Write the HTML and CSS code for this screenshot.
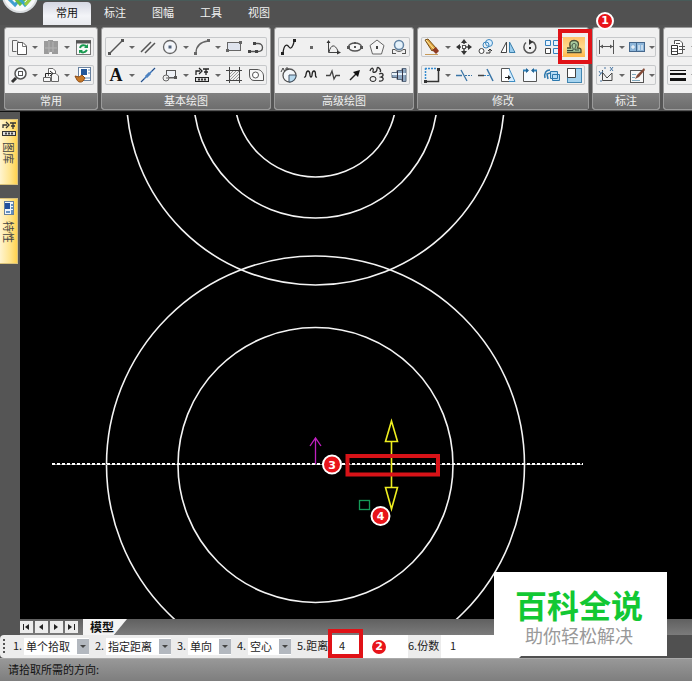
FILE: index.html
```html
<!DOCTYPE html>
<html lang="zh-CN">
<head>
    <meta charset="UTF-8" />
    <meta name="viewport" content="width=device-width, initial-scale=1.0"/>
    <title>CAD</title>
    <link rel="stylesheet" href="styles.css">
</head>
<body>
<div class="app">
    <header class="menu-bar">
        <a href="#" class="logo" aria-label="主页">
            <svg width="38" height="38" viewBox="0 0 38 38">
                <circle cx="19" cy="19" r="18" fill="#d9dde0"/>
                <circle cx="19" cy="19" r="16" fill="#f7f9fa"/>
                <path d="M6 21l8 8 5-6" fill="none" stroke="#3f9fd0" stroke-width="3"/>
                <path d="M13 21l6 7 5-5" fill="none" stroke="#6bbf3c" stroke-width="3"/>
                <path d="M18 22l6 7 8-9" fill="none" stroke="#39a7c4" stroke-width="3"/>
                <path d="M24 29l8-9" fill="none" stroke="#9ccc3c" stroke-width="3"/>
            </svg>
        </a>
        <nav class="menu">
            <a href="#" class="menu-tab active">常用</a>
            <a href="#" class="menu-tab">标注</a>
            <a href="#" class="menu-tab">图幅</a>
            <a href="#" class="menu-tab">工具</a>
            <a href="#" class="menu-tab">视图</a>
        </nav>
    </header>

    <div class="ribbon">
        <!-- Common -->
        <section class="group">
            <div class="group-body">
                <div class="tool-row">
                    <button class="tool" aria-label="复制"><svg viewBox="0 0 18 18"><path d="M6.500 13.500H2.500V2.500H7L9 4.500" fill="#f4f4f4" stroke="#666"/><path d="M7.500 4.500H13L16.500 8V16.500H7.500Z" fill="#fff" stroke="#555"/><path d="M12.500 4.500V8.500H16.500" fill="none" stroke="#777"/></svg></button>
                    <button class="drop" aria-label="更多"></button>
                    <button class="tool" aria-label="粘贴"><svg viewBox="0 0 18 18"><path d="M2 3H6V2H11V3H16V16H10V14H7V16H2Z" fill="#9b9b9b"/><path d="M7 3V15M11 4V14M3 10H15" stroke="#b4b4b4"/></svg></button>
                    <button class="drop" aria-label="更多"></button>
                    <button class="tool" aria-label="刷新"><svg viewBox="0 0 18 18"><rect x="2.500" y="2.500" width="14" height="14" fill="#fafafa" stroke="#777"/><path d="M2 4H17" stroke="#555" stroke-width="3"/><path d="M6 10C7 6.500 11 6.500 13 9M13 12C11 15 8 15 6 13" fill="none" stroke="#189a50" stroke-width="2"/><path d="M14 6V10H10ZM5 15.500V12H9Z" fill="#189a50"/></svg></button>
                </div>
                <div class="tool-row">
                    <button class="tool" aria-label="缩放"><svg viewBox="0 0 18 18"><circle cx="10.500" cy="7.500" r="5.500" fill="#f8fbfd" stroke="#555" stroke-width="1.500"/><rect x="8.500" y="5.500" width="4" height="4" fill="#fff" stroke="#555"/><path d="M6 12L2 16" stroke="#333" stroke-width="3"/></svg></button>
                    <button class="drop" aria-label="更多"></button>
                    <button class="tool" aria-label="插入图块"><svg viewBox="0 0 18 18"><path d="M6.500 10V2.500H11L13.500 5V10" fill="#fff" stroke="#666"/><path d="M9.500 7.500H14L16.500 10V15.500H9.500ZM1.500 11.500H8.500V15.500H1.500Z" fill="#f7f7f7" stroke="#666"/><path d="M3.500 11V7.500H9M8 5L11 7.500L8 10" fill="none" stroke="#222"/></svg></button>
                    <button class="drop" aria-label="更多"></button>
                    <button class="tool" aria-label="特性刷"><svg viewBox="0 0 18 18"><rect x="4.500" y="1.500" width="12" height="13" fill="#fff" stroke="#67809e"/><rect x="7" y="3" width="6" height="6" fill="#23589b"/><path d="M14 4H16M14 7H16M11 12H16" stroke="#5b88b8"/><path d="M1 10L5 11L8 9L11 12L9 15C7 17 4 16 3 14Z" fill="#c67826" stroke="#8b4a14"/></svg></button>
                </div>
            </div>
            <h2 class="group-title">常用</h2>
        </section>

        <!-- Basic drawing -->
        <section class="group">
            <div class="group-body">
                <div class="tool-row">
                    <button class="tool" aria-label="直线"><svg viewBox="0 0 18 18"><path d="M3 15L15 3" stroke="#555" stroke-width="1.500"/><path d="M1 14H4V17H1ZM14 1H17V4H14Z" fill="#555"/></svg></button>
                    <button class="drop" aria-label="更多"></button>
                    <button class="tool" aria-label="平行线"><svg viewBox="0 0 18 18"><path d="M2 14L12 4M6 15L16 5" stroke="#555" stroke-width="1.500"/></svg></button>
                    <button class="tool" aria-label="圆"><svg viewBox="0 0 18 18"><circle cx="9" cy="9" r="6.500" fill="#f4f6fa" stroke="#666" stroke-width="1.300"/><rect x="7.500" y="7.500" width="3" height="3" fill="#52647c"/></svg></button>
                    <button class="drop" aria-label="更多"></button>
                    <button class="tool" aria-label="圆弧"><svg viewBox="0 0 18 18"><path d="M3 15C3 8 8 4 15 3" fill="none" stroke="#666" stroke-width="1.300"/><path d="M1 14H4V17H1ZM14 1H17V4H14Z" fill="#666"/></svg></button>
                    <button class="drop" aria-label="更多"></button>
                    <button class="tool" aria-label="矩形"><svg viewBox="0 0 18 18"><rect x="2.500" y="4.500" width="13" height="8" fill="#dfe4ee" stroke="#666"/><path d="M1 11H4V14H1ZM14 3H17V6H14Z" fill="#666"/></svg></button>
                    <button class="tool" aria-label="多段线"><svg viewBox="0 0 18 18"><path d="M3 13.500H11C17 13.500 17 5.500 11 5.500H7" fill="none" stroke="#555" stroke-width="1.300"/><path d="M1 12H4V15H1ZM8 12H11V15H8ZM6 4H9V7H6Z" fill="#444"/></svg></button>
                </div>
                <div class="tool-row">
                    <button class="tool tool-text" aria-label="文字">A</button>
                    <button class="drop" aria-label="更多"></button>
                    <button class="tool" aria-label="中心线"><svg viewBox="0 0 18 18"><path d="M2 16L16 2" stroke="#3973ba" stroke-width="1.500"/><path d="M7 11L11 7" stroke="#4d82c0" stroke-width="3"/><path d="M2 16L5 13M13 5L16 2" stroke="#2c4a78"/></svg></button>
                    <button class="tool" aria-label="局部放大"><svg viewBox="0 0 18 18"><rect x="5.500" y="4.500" width="9" height="7" fill="#eef1f6" stroke="#555"/><circle cx="5" cy="12" r="3" fill="#eee" stroke="#666"/><path d="M5 12H16" stroke="#666"/><path d="M13 10H16V13H13Z" fill="#555"/></svg></button>
                    <button class="drop" aria-label="更多"></button>
                    <button class="tool" aria-label="提取图符"><svg viewBox="0 0 18 18"><path d="M3 9V5H7M6 2L9 5L6 8M10 3H16M13 3V9M11 6H15" fill="none" stroke="#222" stroke-width="1.300"/><rect x="2.500" y="11.500" width="13" height="4" fill="#ddd" stroke="#222"/><path d="M5 13.500H14" stroke="#333" stroke-width="2" stroke-dasharray="2 1"/></svg></button>
                    <button class="drop" aria-label="更多"></button>
                    <button class="tool" aria-label="剖面线"><svg viewBox="0 0 18 18"><path d="M4.500 1V17M14.500 1V17M1 4.500H17M1 14.500H17" stroke="#444"/><path d="M5 8L8 5M5 11L11 5M5 14L14 5M8 14L14 8M11 14L14 11" stroke="#999"/></svg></button>
                    <button class="tool" aria-label="填充"><svg viewBox="0 0 18 18"><path d="M2.500 3.500H10C14 3.500 16.500 7 16.500 10V14.500H7C4 14.500 2.500 12 2.500 9Z" fill="#f7f7f7" stroke="#555"/><circle cx="8.500" cy="9" r="3" fill="#fff" stroke="#555"/></svg></button>
                </div>
            </div>
            <h2 class="group-title">基本绘图</h2>
        </section>

        <!-- Advanced drawing -->
        <section class="group">
            <div class="group-body">
                <div class="tool-row">
                    <button class="tool" aria-label="样条"><svg viewBox="0 0 18 18"><path d="M3 15C4 6 7 6 9 9C11 12 13 8 14 4" fill="none" stroke="#222" stroke-width="1.300"/><path d="M1 14H4V17H1ZM13 1H16V4H13Z" fill="#222"/></svg></button>
                    <button class="tool" aria-label="点"><svg viewBox="0 0 18 18"><rect x="8" y="8" width="3" height="3" fill="#666"/></svg></button>
                    <button class="tool" aria-label="公式曲线"><svg viewBox="0 0 18 18"><path d="M4.500 3V14.500H14M5 14C7 6 11 6 14 13" fill="none" stroke="#444"/><path d="M4.500 2L6.500 5H2.500ZM17 14.500L13 12.500V16.500Z" fill="#333"/></svg></button>
                    <button class="tool" aria-label="椭圆"><svg viewBox="0 0 18 18"><ellipse cx="9" cy="9" rx="6.500" ry="4" fill="#f5f5f5" stroke="#555" stroke-width="1.300"/><path d="M1 8H4V11H1ZM14 8H17V11H14ZM8 4H10V6H8ZM8 8H10V10H8Z" fill="#555"/></svg></button>
                    <button class="tool" aria-label="正多边形"><svg viewBox="0 0 18 18"><path d="M9 2L16 7.500L13.500 16H4.500L2 7.500Z" fill="#f6f6f6" stroke="#666"/><rect x="8" y="8" width="2" height="3" fill="#444"/></svg></button>
                    <button class="tool" aria-label="圆弧拟合"><svg viewBox="0 0 18 18"><circle cx="9" cy="7" r="4.500" fill="#e5f2fb" stroke="#6384a4" stroke-width="1.500"/><path d="M2.500 16V11.500H5C7 14 11 14 13 11.500H15.500V16M2 15.500H6M12 15.500H16" fill="none" stroke="#555"/></svg></button>
                </div>
                <div class="tool-row">
                    <button class="tool" aria-label="局部视图"><svg viewBox="0 0 18 18"><circle cx="9.500" cy="9.500" r="6.500" fill="#f5f8fb" stroke="#555" stroke-width="1.300"/><path d="M9 9H16C16 13 13 16 9 16Z" fill="#b7d9ee" stroke="#456"/><path d="M1 6L3 2L5 6M5 3H9M7 1V4" fill="none" stroke="#444"/></svg></button>
                    <button class="tool" aria-label="波浪线"><svg viewBox="0 0 18 18"><path d="M2 11C5 12 3 5 6 5S7 11 9 11S9 5 12 5S12 12 15 11" fill="none" stroke="#222" stroke-width="1.300"/></svg></button>
                    <button class="tool" aria-label="双折线"><svg viewBox="0 0 18 18"><path d="M2 9.500H6L8 5L10 13L12 9.500H16" fill="none" stroke="#444" stroke-width="1.300"/></svg></button>
                    <button class="tool" aria-label="箭头"><svg viewBox="0 0 18 18"><path d="M4 14L12 6" stroke="#222" stroke-width="1.500"/><path d="M14 4L12 11L7 6Z" fill="#111"/></svg></button>
                    <button class="tool" aria-label="齿形"><svg viewBox="0 0 18 18"><path d="M2 5C4 0 6 3 5 5S9 7 9 3S14 4 12 6M11 8C16 6 16 10 13 11C17 12 15 16 11 15" fill="none" stroke="#333" stroke-width="1.300"/><ellipse cx="5" cy="13" rx="3" ry="2.500" fill="none" stroke="#222"/></svg></button>
                    <button class="tool" aria-label="孔轴"><svg viewBox="0 0 18 18"><path d="M2 6.500H7V4.500H12V2.500H16V15.500H12V13.500H7V11.500H2Z" fill="#8fa9c4" stroke="#58697d"/><path d="M2 8H16" stroke="#e8f2fa" stroke-width="2"/><path d="M7.500 5V13M12.500 3V15" stroke="#334"/></svg></button>
                </div>
            </div>
            <h2 class="group-title">高级绘图</h2>
        </section>

        <!-- Modify -->
        <section class="group group-marked">
            <div class="group-body">
                <div class="tool-row">
                    <button class="tool" aria-label="删除"><svg viewBox="0 0 18 18"><path d="M2 2L5 1L13 10L9 13Z" fill="#e0a340" stroke="#765018"/><path d="M3 2L11 11" stroke="#fff0a8"/><path d="M9 12L13 9L16 13L13 16Z" fill="#8e3b23"/><path d="M2 16.500H15" stroke="#c79a58"/></svg></button>
                    <button class="drop" aria-label="更多"></button>
                    <button class="tool" aria-label="平移"><svg viewBox="0 0 18 18"><path d="M9 3V15M3 9H15" stroke="#444" stroke-width="1.500" stroke-dasharray="3 1"/><path d="M9 1L12 5H6ZM9 17L12 13H6ZM1 9L5 6V12ZM17 9L13 6V12Z" fill="#333"/><rect x="7.500" y="7.500" width="3" height="3" fill="#fff" stroke="#555"/></svg></button>
                    <button class="tool" aria-label="平移复制"><svg viewBox="0 0 18 18"><circle cx="12" cy="5" r="3.500" fill="#dbefff" stroke="#3d87be"/><circle cx="9" cy="7" r="3" fill="none" stroke="#3d87be"/><circle cx="4.500" cy="13" r="2.500" fill="#fff" stroke="#444"/><path d="M9 15H13V12M11 13L13 11L15 13" fill="none" stroke="#333"/></svg></button>
                    <button class="tool" aria-label="镜像"><svg viewBox="0 0 18 18"><path d="M7.500 4V14.500H2Z" fill="#fff" stroke="#444"/><path d="M10.500 4V14.500H16Z" fill="#9bcdee" stroke="#397fac"/></svg></button>
                    <button class="tool" aria-label="旋转"><svg viewBox="0 0 18 18"><path d="M11 3.500A6 6 0 1 1 5 4.500" fill="none" stroke="#555" stroke-width="1.500"/><path d="M8 1L12 4L8 7Z" fill="#333"/><rect x="8" y="9" width="2" height="2" fill="#222"/></svg></button>
                    <button class="tool" aria-label="阵列"><svg viewBox="0 0 18 18"><path d="M2.500 2.500H7.500V7.500H2.500ZM10.500 2.500H15.500V7.500H10.500ZM10.500 10.500H15.500V15.500H10.500Z" fill="#e6f4ff" stroke="#3581bd"/><path d="M2.500 10.500H7.500V15.500H2.500Z" fill="#fff" stroke="#444"/></svg></button>
                    <button class="tool selected" aria-label="等距线"><svg viewBox="0 0 18 18"><path d="M2 14.500H16V12C16 11 14.500 10 12.500 10C15 4 12 2.500 9 2.500S3.500 4 5.500 10H2" fill="#a9cda0" stroke="#4c5036" stroke-width="1.300"/><path d="M2 12.500H8C9 10 6.500 9 7 7C7.500 5 11 5 11 7C11 9 9.500 10 10 12H14" fill="none" stroke="#33453a"/></svg><span class="mark mark-tool"></span><span class="badge badge-tool">1</span></button>
                </div>
                <div class="tool-row">
                    <button class="tool" aria-label="裁剪框"><svg viewBox="0 0 18 18"><path d="M2 2.500H14M2.500 2V15" stroke="#358bcf" stroke-width="1.500" stroke-dasharray="2 1"/><path d="M15.500 4V15.500H3" fill="none" stroke="#333" stroke-width="1.500"/><rect x="1" y="14" width="3" height="3" fill="#333"/><rect x="14" y="2" width="3" height="3" fill="#333"/></svg></button>
                    <button class="drop" aria-label="更多"></button>
                    <button class="tool" aria-label="裁剪"><svg viewBox="0 0 18 18"><path d="M1 9.500H7M6 4L12 15" stroke="#3a75a6" stroke-width="1.300"/><path d="M10 9.500H17" stroke="#3a75a6" stroke-dasharray="2 1"/></svg></button>
                    <button class="tool" aria-label="延伸"><svg viewBox="0 0 18 18"><path d="M1 9.500H7" stroke="#444" stroke-width="1.500"/><path d="M7 9.500H12" stroke="#3888c6" stroke-dasharray="2 1"/><path d="M10 3L16 15" stroke="#3a75a6" stroke-width="1.500"/></svg></button>
                    <button class="tool" aria-label="拉伸"><svg viewBox="0 0 18 18"><path d="M10.500 2.500V15.500H2.500V2.500Z" fill="#fff" stroke="#555"/><path d="M10 2.500L16 15.500H10" fill="#d6edff" stroke="#3c8cc2"/><path d="M6 11.500H10" stroke="#222"/><path d="M9 9L12 11.500L9 14Z" fill="#222"/></svg></button>
                    <button class="tool" aria-label="打断"><svg viewBox="0 0 18 18"><path d="M6 4.500H2.500V15.500H15.500V4.500H12" fill="#f7fbff" stroke="#555"/><path d="M2 4.500H7M11 4.500H16" stroke="#2b80b9" stroke-width="2"/><path d="M5 2L8 4.500L5 7ZM13 2L10 4.500L13 7Z" fill="#24689a"/></svg></button>
                    <button class="tool" aria-label="分解"><svg viewBox="0 0 18 18"><path d="M7.500 5.500H14.500V12.500H7.500ZM9.500 8.500H16.500V14.500H9.500Z" fill="#b7dcf5" stroke="#2c78ad"/><path d="M2 12C1 7 3 4 7 4M5 13L4 8L7 7" fill="none" stroke="#2c78ad" stroke-width="1.500"/></svg></button>
                    <button class="tool" aria-label="缩放图形"><svg viewBox="0 0 18 18"><rect x="2.500" y="2.500" width="14" height="14" fill="#a5d3ef" stroke="#4286b1"/><path d="M2.500 2.500H10.500V11.500H2.500Z" fill="#fff" stroke="#444"/></svg></button>
                </div>
            </div>
            <h2 class="group-title">修改</h2>
        </section>

        <!-- Dimension -->
        <section class="group compact">
            <div class="group-body">
                <div class="tool-row">
                    <button class="tool" aria-label="尺寸标注"><svg viewBox="0 0 18 18"><path d="M1.500 2V16M15.500 2V16M2 8.500H15" stroke="#555"/><path d="M2 8.500L5 6.500V10.500ZM15 8.500L12 6.500V10.500Z" fill="#555"/></svg></button>
                    <button class="drop" aria-label="更多"></button>
                    <button class="tool" aria-label="公差"><svg viewBox="0 0 18 18"><rect x="1.500" y="4.500" width="15" height="9" fill="#8db6da" stroke="#45688d"/><path d="M8.500 4V14" stroke="#45688d"/><path d="M3 9H7M5 7V11M11 12V7M14 12V7" stroke="#fff"/></svg></button>
                    <button class="drop" aria-label="更多"></button>
                </div>
                <div class="tool-row">
                    <button class="tool" aria-label="坐标标注"><svg viewBox="0 0 18 18"><path d="M4.500 4V14.500H14V7L9 12L5 7" fill="none" stroke="#444"/><path d="M6 2H8M12 1L15 5M15 1L12 5M1 5L3 8M5 5L1 10M2 15H4" stroke="#4977a4"/></svg></button>
                    <button class="drop" aria-label="更多"></button>
                    <button class="tool" aria-label="标注编辑"><svg viewBox="0 0 18 18"><rect x="2.500" y="4.500" width="13" height="12" fill="#f7f7f7" stroke="#555"/><path d="M4 14.500H12M4 8.500H8M4 11.500H7" stroke="#80a8bd"/><path d="M16 2L9 9L7 13L11 11L17 4Z" fill="#844b38"/></svg></button>
                    <button class="drop" aria-label="更多"></button>
                </div>
            </div>
            <h2 class="group-title">标注</h2>
        </section>

        <!-- Layers, runs off the right edge -->
        <section class="group group-last">
            <div class="group-body">
                <div class="tool-row">
                    <button class="tool" aria-label="图层"><svg viewBox="0 0 18 18"><path d="M5.500 6V2.500H11L13.500 5V15.500H8" fill="#fff" stroke="#555"/><path d="M2.500 7.500H8.500V16.500H2.500Z" fill="#fff" stroke="#333"/><path d="M3 10.500H8M3 13.500H8M7 5.500H11M10 8.500H16M10 11.500H16" stroke="#555"/></svg></button>
                    <button class="drop" aria-label="更多"></button>
                    <button class="tool" aria-label="颜色"></button>
                </div>
                <div class="tool-row">
                    <button class="tool" aria-label="线宽"><svg viewBox="0 0 18 18"><path d="M1 4.500H17" stroke="#111"/><path d="M1 8H17" stroke="#111" stroke-width="2"/><path d="M1 13.500H17" stroke="#111" stroke-width="3"/></svg></button>
                    <button class="drop" aria-label="更多"></button>
                    <button class="tool" aria-label="线型"></button>
                </div>
            </div>
            <div class="group-title"></div>
        </section>
    </div>

    <main class="workspace">
        <aside class="side-bar">
            <button class="side-tab">
                <svg width="16" height="16" viewBox="0 0 16 16"><path d="M2 7V4H6M5 1L8 4L5 7M9 2H15M12 2V8M10 5H14" fill="none" stroke="#333" stroke-width="1.300"/><rect x="1.500" y="10.500" width="13" height="4" fill="#ddd" stroke="#333"/><path d="M4 12.500H13" stroke="#444" stroke-width="2" stroke-dasharray="2 1"/></svg>
                <span>图库</span>
            </button>
            <button class="side-tab">
                <svg width="16" height="16" viewBox="0 0 16 16"><rect x="3.500" y="1.500" width="9" height="13" fill="#eef4fb" stroke="#67809e"/><rect x="4" y="3" width="5" height="6" fill="#214f9d"/><path d="M10 5H12M10 8H12M5 12H9M11 10V14" stroke="#356fae" stroke-width="1.500"/></svg>
                <span>特性</span>
            </button>
        </aside>
        <svg class="drawing" viewBox="20 112 672 507" preserveAspectRatio="xMinYMin slice">
            <clipPath id="view"><rect x="20" y="115" width="1400" height="1200"/></clipPath>
            <g clip-path="url(#view)" fill="none" stroke="#f4f4f4" stroke-width="1.600">
                <circle cx="315.500" cy="96" r="81"/>
                <circle cx="315.500" cy="96" r="122"/>
                <circle cx="315.500" cy="96" r="189"/>
                <circle cx="315.500" cy="465" r="209"/>
                <circle cx="315.500" cy="465" r="137.500"/>
            </g>
            <!-- centre line -->
            <path d="M52 464.500H583" stroke="#8c8c8c"/>
            <path d="M52 464H583" stroke="#fff" stroke-width="2" stroke-dasharray="3 2"/>
            <path d="M315.500 464V438M310 446L315.500 438L321 446" fill="none" stroke="#c020c0" stroke-width="1.300"/>
            <!-- direction arrows -->
            <path d="M391.500 441V488M391.500 421L385.500 441.500H397.500ZM391.500 509L385.500 487.500H397.500Z" fill="none" stroke="#eeee20" stroke-width="1.600"/>
            <rect x="359.500" y="500.500" width="10" height="9" fill="none" stroke="#149a58" stroke-width="1.300"/>
            <rect x="347.500" y="456" width="90.500" height="18.500" fill="none" stroke="#d81318" stroke-width="4"/>
            <g class="pin">
                <circle cx="332" cy="464.500" r="9"/>
                <text x="332" y="469">3</text>
                <circle cx="380.500" cy="516" r="9"/>
                <text x="380.500" y="520">4</text>
            </g>
        </svg>
    </main>

    <div class="sheet-bar">
        <button class="sheet-nav" aria-label="第一页"><svg width="12" height="12" viewBox="0 0 12 12"><path d="M3.500 3V9" stroke="#222"/><path d="M9 3V9L5 6Z" fill="#222"/></svg></button>
        <button class="sheet-nav" aria-label="上一页"><svg width="12" height="12" viewBox="0 0 12 12"><path d="M8 3V9L4 6Z" fill="#222"/></svg></button>
        <button class="sheet-nav" aria-label="下一页"><svg width="12" height="12" viewBox="0 0 12 12"><path d="M4 3V9L8 6Z" fill="#222"/></svg></button>
        <button class="sheet-nav" aria-label="最后一页"><svg width="12" height="12" viewBox="0 0 12 12"><path d="M9.500 3V9" stroke="#222"/><path d="M3 3V9L7 6Z" fill="#222"/></svg></button>
        <button class="sheet-tab">模型</button>
    </div>

    <div class="option-bar">
        <form class="options">
            <span class="grip"></span>
            <label class="opt-label" for="pick">1.</label>
            <span class="select-box wide"><select id="pick"><option>单个拾取</option></select></span>
            <label class="opt-label" for="mode">2.</label>
            <span class="select-box wide"><select id="mode"><option>指定距离</option></select></span>
            <label class="opt-label" for="direction">3.</label>
            <span class="select-box"><select id="direction"><option>单向</option></select></span>
            <label class="opt-label" for="fill">4.</label>
            <span class="select-box"><select id="fill"><option>空心</option></select></span>
            <label class="opt-name" for="distance">5.距离</label>
            <span class="input-box"><input id="distance" type="text" value="4"><span class="mark mark-input"></span><span class="badge badge-input">2</span></span>
            <label class="opt-name" for="count">6.份数</label>
            <span class="input-box"><input id="count" type="text" value="1"></span>
        </form>
    </div>

    <footer class="status-bar">请拾取所需的方向:</footer>

    <div class="watermark">
        <strong>百科全说</strong>
        <span>助你轻松解决</span>
    </div>
</div>
</body>
</html>
```
FILE: styles.css
```css
* {
    box-sizing: border-box;
}

body {
    margin: 0;
    background: #505050;
    font-family: "Noto Sans CJK SC", sans-serif;
    font-size: 11px;
    color: #222;
}

button, select, input {
    margin: 0;
    padding: 0;
    border: none;
    border-radius: 0;
    background: none;
    font: inherit;
    color: inherit;
}

.app {
    position: relative;
    display: flex;
    flex-direction: column;
    min-height: 100vh;
    overflow: hidden;
}

/* menu */
.menu-bar {
    display: flex;
    height: 25px;
    padding-left: 43px;
    background: #515151;
    border-top: 1px solid #485b59;
}

.logo {
    position: absolute;
    left: 1px;
    top: -24px;
    height: 38px;
}

.menu {
    display: flex;
    align-items: flex-end;
}

.menu-tab {
    height: 23px;
    padding: 0 13px;
    line-height: 21px;
    color: #f2f2f2;
    text-decoration: none;
}

.menu-tab.active {
    color: #111;
    background: linear-gradient(#d4d7e2, #f3f4f8 60%, #e8eaee);
    border-radius: 4px 4px 0 0;
}

/* ribbon */
.ribbon {
    display: flex;
    gap: 3px;
    height: 87px;
    padding: 2px 0 1px 4px;
    background: #555;
    border-bottom: 1px solid #111;
}

.group {
    display: flex;
    flex-direction: column;
    flex: none;
    background: #f0f0f0;
    border: 1px solid #9a9a9a;
    border-radius: 3px;
    overflow: hidden;
}

.group-marked {
    overflow: visible;
}

.group-last {
    flex: 1 0 auto;
    margin-right: -60px;
}

.group-body {
    display: flex;
    flex-direction: column;
    gap: 8px;
    flex: 1;
    padding: 9px 3px 0;
}

.tool-row {
    display: flex;
    height: 20px;
    border-radius: 2px;
    box-shadow: inset 0 0 0 1px #c6c8ca;
}

.tool {
    position: relative;
    display: flex;
    align-items: center;
    justify-content: center;
    width: 22px;
    height: 20px;
}

.tool svg {
    width: 18px;
    height: 18px;
}

.tool-text {
    font: bold 18px "Liberation Serif", serif;
    color: #111;
}

.tool.selected {
    background: linear-gradient(#ffc36b, #ffd98a 50%, #ffb648);
}

.drop {
    display: flex;
    align-items: center;
    justify-content: center;
    width: 10px;
    height: 20px;
}

.drop::after {
    content: "";
    border: 3px solid transparent;
    border-top-color: #666;
    border-bottom: none;
}

.compact .drop {
    width: 8px;
}

.group-title {
    height: 16px;
    margin: 0;
    background: linear-gradient(#808080, #6d6d6d);
    color: #f2f2f2;
    font-size: 11px;
    font-weight: normal;
    line-height: 15px;
    text-align: center;
}

/* numbered marks */
.mark {
    position: absolute;
    border: 4px solid #e01217;
    pointer-events: none;
    z-index: 2;
}

.mark-tool {
    left: -5px;
    top: -8px;
    width: 34px;
    height: 35px;
}

.badge {
    position: absolute;
    width: 18px;
    height: 18px;
    border: 2px solid #fff;
    border-radius: 50%;
    background: #e8141a;
    color: #fff;
    font: bold 11px/14px "DejaVu Sans", sans-serif;
    text-align: center;
    z-index: 3;
}

.badge-tool {
    left: 33px;
    top: -25px;
}

/* workspace */
.workspace {
    display: flex;
    flex: 1;
    min-height: 0;
    background: #000;
}

.side-bar {
    display: flex;
    flex-direction: column;
    gap: 13px;
    width: 20px;
    padding: 7px 2px 0 0;
    background: #555;
}

.side-tab {
    display: flex;
    flex-direction: column;
    align-items: center;
    gap: 5px;
    height: 66px;
    padding-top: 1px;
    background: linear-gradient(to right, #fff4cf, #ffe48c 60%, #ffd24f);
    border: 1px solid #d9c27c;
    border-left: none;
}

.side-tab span {
    writing-mode: vertical-rl;
    text-orientation: sideways;
    line-height: 14px;
    color: #444;
}

.drawing {
    flex: 1;
    min-width: 0;
    height: calc(100vh - 174px);
}

.pin circle {
    fill: #e8141a;
    stroke: #fff;
    stroke-width: 2;
}

.pin text {
    fill: #fff;
    font: bold 11px "DejaVu Sans", sans-serif;
    text-anchor: middle;
}

/* sheet tabs */
.sheet-bar {
    display: flex;
    align-items: center;
    gap: 2px;
    height: 16px;
    padding-left: 20px;
    background: linear-gradient(to right, #555 20px, transparent 20px), linear-gradient(#606060, #7b7b7b);
}

.sheet-nav {
    width: 13px;
    height: 12px;
    background: #ececec;
}

.sheet-nav svg {
    display: block;
}

.sheet-tab {
    align-self: stretch;
    width: 44px;
    margin-left: 3px;
    padding-right: 6px;
    background: #f4f4f4;
    clip-path: polygon(0 0, 100% 0, 70% 100%, 0 100%);
    font-size: 12px;
    font-weight: bold;
    line-height: 16px;
    color: #111;
}

/* options */
.option-bar {
    display: flex;
    height: 23px;
    background: #505050;
}

.options {
    display: flex;
    align-items: center;
    padding-left: 3px;
    background: #ececec;
    border-radius: 4px 0 0 4px;
}

/* slanted end of the bar */
.option-bar::after {
    content: "";
    width: 12px;
    height: 23px;
    background: #fff;
    clip-path: polygon(0 0, 100% 0, 100% 50%, 0 100%);
}

.grip {
    width: 2px;
    height: 15px;
    margin-right: 8px;
    background: repeating-linear-gradient(#555 0 2px, transparent 2px 4px);
}

.opt-label {
    width: 11px;
    line-height: 20px;
    margin-bottom: 3px;
}

.opt-name {
    width: 33px;
    line-height: 20px;
    margin-bottom: 3px;
    white-space: nowrap;
}

.select-box {
    position: relative;
    width: 43px;
    height: 17px;
    margin-right: 6px;
    background: #fff;
}

.select-box.wide {
    width: 65px;
}

.select-box select {
    appearance: none;
    display: block;
    width: 100%;
    height: 17px;
    padding-left: 2px;
    line-height: 17px;
}

.select-box::after {
    content: "";
    position: absolute;
    top: 1px;
    right: 0;
    width: 12px;
    height: 15px;
    background: #b3b8bf;
    pointer-events: none;
}

.select-box::before {
    content: "";
    position: absolute;
    top: 7px;
    right: 3px;
    border: 3px solid transparent;
    border-top-color: #444;
    border-bottom: none;
    pointer-events: none;
    z-index: 1;
}

.input-box {
    position: relative;
    width: 78px;
    height: 23px;
    background: #fff;
}

.input-box input {
    display: block;
    width: 48px;
    height: 20px;
    padding-left: 9px;
}

.mark-input {
    left: -2px;
    top: -6px;
    width: 35px;
    height: 29px;
}

.badge-input {
    left: 40px;
    top: 3px;
}

/* status */
.status-bar {
    height: 23px;
    padding-left: 8px;
    background: linear-gradient(#989898, #7e7e7e);
    border-top: 1px solid #aaa;
    line-height: 20px;
    color: #111;
}

.watermark {
    position: absolute;
    right: 25px;
    bottom: 25px;
    display: flex;
    flex-direction: column;
    align-items: center;
    width: 173px;
    height: 84px;
    padding: 14px 3px 0 0;
    background: #fff;
}

.watermark strong {
    font-size: 32px;
    font-weight: bold;
    line-height: 36px;
    color: #12c833;
}

.watermark span {
    font-size: 18px;
    line-height: 26px;
    color: #999;
}
```
